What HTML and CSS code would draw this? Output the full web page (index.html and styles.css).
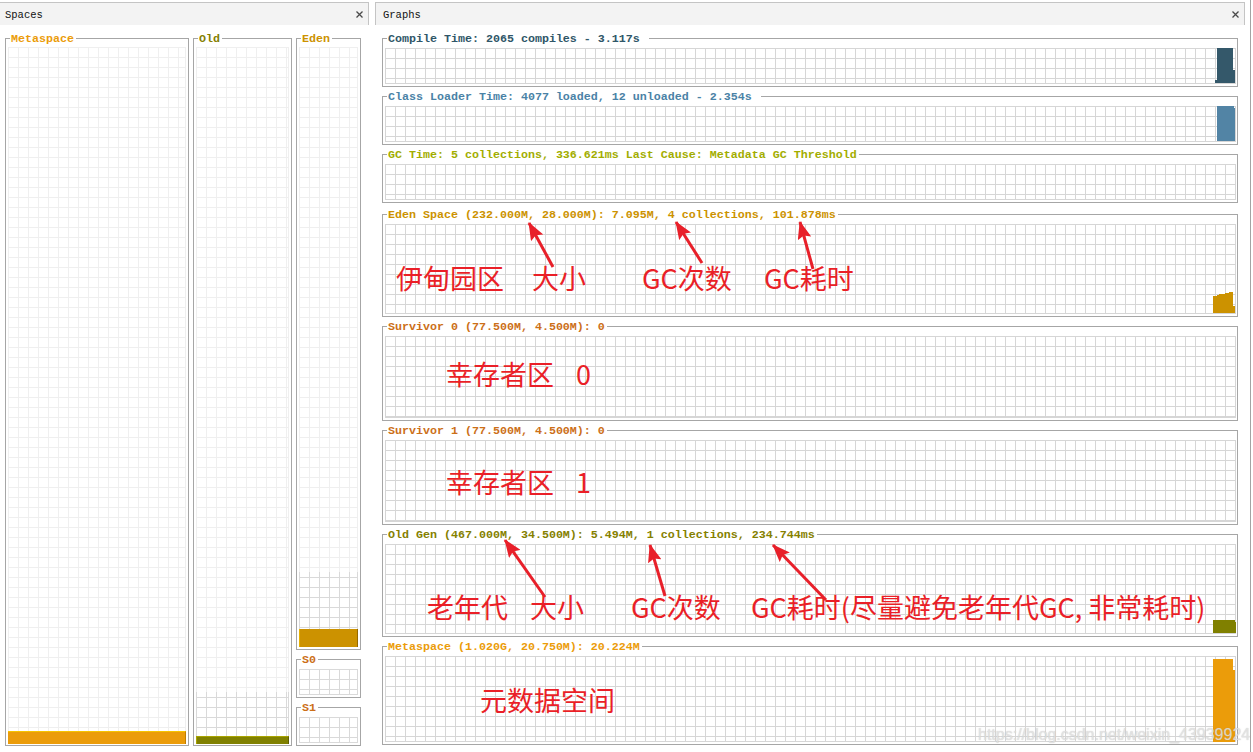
FILE: index.html
```html
<!DOCTYPE html>
<html lang="zh">
<head>
<meta charset="utf-8">
<title>Visual GC</title>
<link rel="stylesheet" href="styles.css">
</head>
<body>
<div class="app">
  <section class="panel spaces">
    <div class="tab">
      <span class="tab-title">Spaces</span>
      <svg class="close" width="7" height="7" viewBox="0 0 7 7"><path d="M0.5 0.5L6.5 6.5M6.5 0.5L0.5 6.5"/></svg>
    </div>
    <div class="spaces-body">
      <fieldset class="box col-meta">
        <legend class="c-meta">Metaspace</legend>
        <div class="grid light nb">
          <div class="bar bar-meta"></div>
        </div>
      </fieldset>
      <fieldset class="box col-old">
        <legend class="c-old">Old</legend>
        <div class="grid light nb">
          <div class="cap cap-old"><div class="bar bar-old"></div></div>
        </div>
      </fieldset>
      <div class="col-eden">
        <fieldset class="box eden-box">
          <legend class="c-eden">Eden</legend>
          <div class="grid light nb">
            <div class="cap cap-eden"><div class="bar bar-eden"></div></div>
          </div>
        </fieldset>
        <fieldset class="box s-box">
          <legend class="c-surv">S0</legend>
          <div class="grid dark s-grid"></div>
        </fieldset>
        <fieldset class="box s-box">
          <legend class="c-surv">S1</legend>
          <div class="grid dark s-grid"></div>
        </fieldset>
      </div>
    </div>
  </section>

  <section class="panel graphs">
    <div class="tab">
      <span class="tab-title">Graphs</span>
      <svg class="close" width="7" height="7" viewBox="0 0 7 7"><path d="M0.5 0.5L6.5 6.5M6.5 0.5L0.5 6.5"/></svg>
    </div>
    <div class="graphs-body">
      <fieldset class="box gbox">
        <legend class="c-compile">Compile Time: 2065 compiles - 3.117s </legend>
        <div class="grid gg h36">
          <svg class="plot" width="851" height="36" viewBox="0 0 851 36"><polygon fill="#34586a" points="832,0 848,0 848,22 850,22 850,35 830,35 830,32 832,32"/></svg>
        </div>
      </fieldset>
      <fieldset class="box gbox">
        <legend class="c-class">Class Loader Time: 4077 loaded, 12 unloaded - 2.354s </legend>
        <div class="grid gg h36">
          <svg class="plot" width="851" height="36" viewBox="0 0 851 36"><polygon fill="#5284a5" points="832,0 849,0 849,2 850,2 850,35 832,35"/></svg>
        </div>
      </fieldset>
      <fieldset class="box gbox">
        <legend class="c-gc">GC Time: 5 collections, 336.621ms Last Cause: Metadata GC Threshold</legend>
        <div class="grid gg h36"></div>
      </fieldset>
      <fieldset class="box gbox mt2">
        <legend class="c-eden">Eden Space (232.000M, 28.000M): 7.095M, 4 collections, 101.878ms</legend>
        <div class="grid gg h90">
          <div class="anno anno-eden">
            <span class="w136">伊甸园区</span><span class="w110">大小</span><span class="w122">GC次数</span><span>GC耗时</span>
          </div>
          <svg class="plot" width="851" height="90" viewBox="0 0 851 90"><polygon fill="#cc9200" points="828,89 828,72 832,72 832,71 834,71 834,70 840,70 840,69 844,69 844,68 848,68 848,82 850,82 850,89"/></svg>
        </div>
      </fieldset>
      <fieldset class="box gbox">
        <legend class="c-surv">Survivor 0 (77.500M, 4.500M): 0</legend>
        <div class="grid gg h82">
          <div class="anno anno-s0"><span class="w130">幸存者区</span><span>0</span></div>
        </div>
      </fieldset>
      <fieldset class="box gbox">
        <legend class="c-surv">Survivor 1 (77.500M, 4.500M): 0</legend>
        <div class="grid gg h82">
          <div class="anno anno-s1"><span class="w130">幸存者区</span><span>1</span></div>
        </div>
      </fieldset>
      <fieldset class="box gbox">
        <legend class="c-old">Old Gen (467.000M, 34.500M): 5.494M, 1 collections, 234.744ms</legend>
        <div class="grid gg h90">
          <div class="anno anno-old">
            <span class="w103">老年代</span><span class="w101">大小</span><span class="w120">GC次数</span><span>GC耗时(尽量避免老年代GC, 非常耗时)</span>
          </div>
          <svg class="plot" width="851" height="90" viewBox="0 0 851 90"><polygon fill="#808000" points="828,89 828,76 850,76 850,78 851,78 851,89"/></svg>
        </div>
      </fieldset>
      <fieldset class="box gbox">
        <legend class="c-meta">Metaspace (1.020G, 20.750M): 20.224M</legend>
        <div class="grid gg h86">
          <div class="anno anno-meta"><span>元数据空间</span></div>
          <svg class="plot" width="851" height="86" viewBox="0 0 851 86"><polygon fill="#eb9c0a" points="828,86 828,3 848,3 848,14 850,14 850,86"/></svg>
        </div>
      </fieldset>
    </div>
  </section>

  <svg class="arrows" width="1253" height="752" viewBox="0 0 1253 752">
    <defs>
      <marker id="ah" markerUnits="userSpaceOnUse" markerWidth="18" markerHeight="14" refX="17" refY="7" orient="auto">
        <path d="M0,0 L18,7 L0,14 L3,7 z" fill="#e8202a"/>
      </marker>
    </defs>
    <g stroke="#e8202a" stroke-width="3" fill="none">
      <line x1="553" y1="267" x2="529" y2="223" marker-end="url(#ah)"/>
      <line x1="702" y1="263" x2="676" y2="222" marker-end="url(#ah)"/>
      <line x1="813" y1="269" x2="800" y2="222" marker-end="url(#ah)"/>
      <line x1="545" y1="597" x2="505" y2="540" marker-end="url(#ah)"/>
      <line x1="665" y1="596" x2="650" y2="545" marker-end="url(#ah)"/>
      <line x1="826" y1="600" x2="773" y2="545" marker-end="url(#ah)"/>
    </g>
  </svg>
  <div class="watermark">https://blog.csdn.net/weixin_43939924</div>
</div>
</body>
</html>
```
FILE: styles.css
```css
* { box-sizing: border-box; }
html, body { margin: 0; padding: 0; background: #fff; }
body {
  width: 1253px;
  height: 752px;
  overflow: hidden;
  font-family: "Liberation Mono", monospace;
}

.app {
  position: relative;
  display: flex;
  gap: 6px;
  width: 1253px;
  height: 752px;
  background: #fff;
}

.panel {
  display: flex;
  flex-direction: column;
  height: 752px;
}
.spaces { width: 369px; }
.graphs { width: 876px; border-right: 1px solid #a3a3a3; }

/* tab headers */
.tab {
  display: flex;
  align-items: center;
  justify-content: space-between;
  height: 23px;
  margin-top: 2px;
  padding-top: 1px;
  border-top: 1px solid #c4c4c4;
  background: #f3f3f3;
  font-size: 10.5px;
  color: #111;
  padding-right: 5px;
  flex: none;
}
.spaces .tab { border-right: 1px solid #c4c4c4; padding-left: 5px; }
.graphs .tab {
  border-left: 1px solid #c4c4c4;
  border-right: 1px solid #c4c4c4;
  margin-right: 5px;
  padding-left: 7px;
}
.tab-title { line-height: 12px; }
.close { display: block; }
.close path { stroke: #4a4a4a; stroke-width: 1.3; fill: none; }

/* titled boxes */
.box {
  margin: 0;
  min-width: 0;
  border: 1px solid #a6a6a6;
  display: flex;
  flex-direction: column;
  padding: 3px 2px 1px 2px;
}
.box legend {
  padding: 0 2px 0 1px;
  margin-left: 2px;
  font: bold 11.67px/14px "Liberation Mono", monospace;
  height: 12px;
  white-space: pre;
}

.c-meta { color: #eb9c0a; }
.c-old { color: #858000; }
.c-eden { color: #cc9200; }
.c-surv { color: #cc6f18; }
.c-compile { color: #2f5668; }
.c-class { color: #4a82a6; }
.c-gc { color: #a2ad00; }

/* grids */
.grid {
  --gl: #d9d9d9;
  background-color: #fff;
  background-image:
    linear-gradient(to right, var(--gl) 1px, transparent 1px),
    linear-gradient(to bottom, var(--gl) 1px, transparent 1px);
  background-size: 10px 10px;
  border-right: 1px solid var(--gl);
  border-bottom: 1px solid var(--gl);
}
.grid.light { --gl: #efefef; flex: 1; display: flex; flex-direction: column; justify-content: flex-end; }
.grid.dark { --gl: #d9d9d9; }
.grid.nb { border-bottom: 0; }

/* spaces column */
.spaces-body {
  display: flex;
  gap: 4px;
  padding: 7px 0 6px 5px;
  flex: 1;
  min-height: 0;
}
.col-meta { width: 184px; }
.col-old { width: 99px; }
.col-eden {
  width: 65px;
  display: flex;
  flex-direction: column;
  gap: 3px;
}
.eden-box { flex: 1; padding-bottom: 2px; }
.s-box { height: 45px; padding: 4px 2px 2px 2px; flex: none; }
.s-grid { height: 26px; }

.cap {
  --gl: #d9d9d9;
  margin-right: -1px;
  background-color: #fff;
  background-image:
    linear-gradient(to right, var(--gl) 1px, transparent 1px),
    linear-gradient(to bottom, var(--gl) 1px, transparent 1px);
  background-size: 10px 10px;
  background-position: 0 5px;
  border-right: 1px solid var(--gl);
  display: flex;
  flex-direction: column;
  justify-content: flex-end;
}
.cap-old { height: 52px; }
.cap-eden { height: 75px; }

.bar { flex: none; margin-right: -1px; }
.bar-meta {
  height: 13px;
  background: #eb9c0a;
  border-top: 1px solid #f6c400;
  border-right: 1px solid #c07e00;
}
.bar-old {
  height: 8px;
  background: #808000;
  border-top: 1px solid #a8a400;
  border-left: 1px solid #a8a400;
  border-right: 1px solid #5e5e00;
}
.bar-eden {
  height: 18px;
  background: #cc9200;
  border-left: 1px solid #e6b000;
  border-right: 1px solid #946800;
}

/* graphs column */
.graphs-body {
  display: flex;
  flex-direction: column;
  gap: 3px;
  padding: 7px 0 0 7px;
}
.gbox { width: 856px; padding: 4px 1px 2px 2px; flex: none; }
.mt2 { margin-top: 2px; }
.gg { --gl: #d6d6d6; width: 851px; position: relative; }
.h36 { height: 36px; }
.h82 { height: 82px; }
.h86 { height: 86px; }
.h90 { height: 90px; }

.plot { position: absolute; left: 0; top: 0; overflow: visible; }

/* annotations */
.anno {
  display: flex;
  font: 27px/30px "Noto Sans CJK SC", sans-serif;
  color: #ea1f27;
  white-space: pre;
}
.anno span { flex: none; }
.anno-eden { padding: 39px 0 0 11px; }
.anno-s0 { padding: 23px 0 0 61px; }
.anno-s1 { padding: 27px 0 0 61px; }
.anno-old { padding: 48px 0 0 42px; }
.anno-meta { padding: 29px 0 0 95px; }
.w136 { width: 136px; }
.w110 { width: 110px; }
.w122 { width: 122px; }
.w130 { width: 130px; }
.w103 { width: 103px; }
.w101 { width: 101px; }
.w120 { width: 120px; }

.arrows {
  position: absolute;
  left: 0;
  top: 0;
  pointer-events: none;
}

.watermark {
  position: absolute;
  left: 978px;
  top: 725px;
  font: 16px/20px "Liberation Sans", sans-serif;
  color: rgba(232, 232, 232, 0.8);
  text-shadow: 0 0 1px rgba(140, 140, 140, 0.5);
  pointer-events: none;
  white-space: nowrap;
}
```
